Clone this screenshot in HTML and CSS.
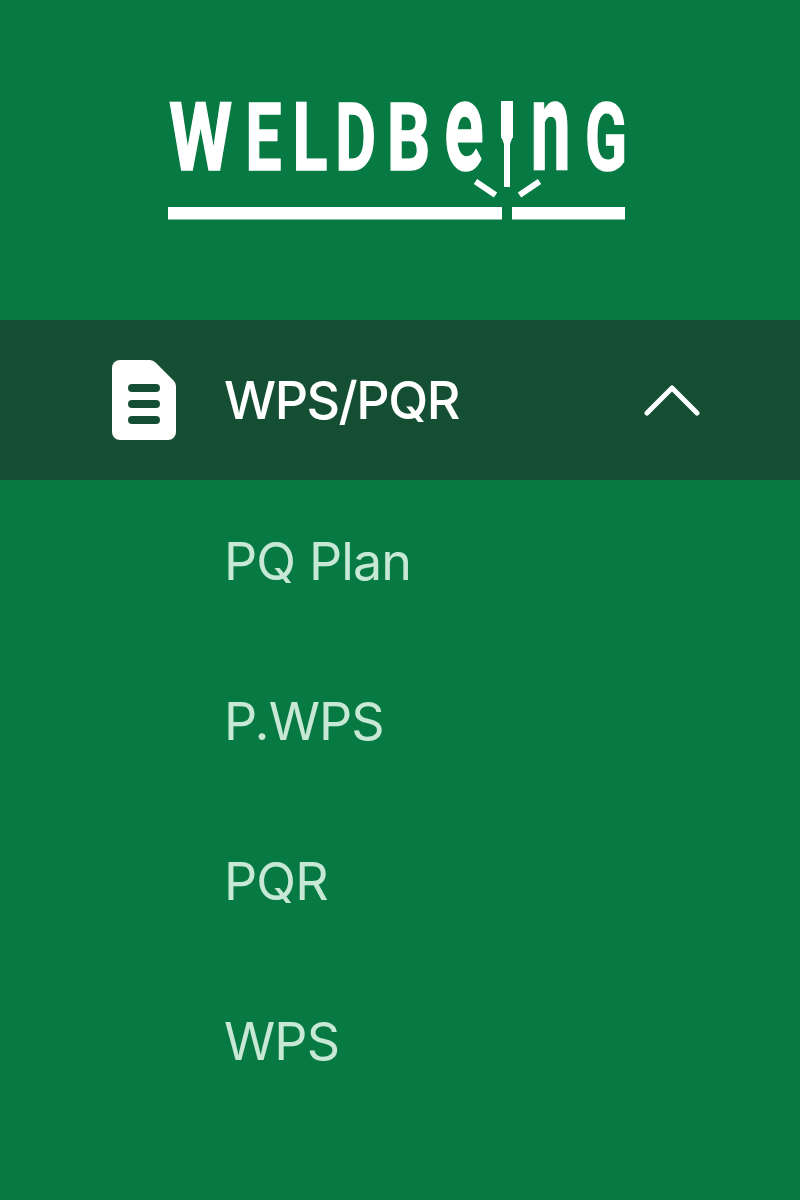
FILE: index.html
```html
<!DOCTYPE html>
<html lang="en">
<head>
<meta charset="utf-8">
<title>WELDBEING</title>
<link rel="stylesheet" href="styles.css">
</head>
<body>
<nav class="sidebar">
  <div class="logo">
    <svg class="logo-svg" width="458" height="120" viewBox="168 100 458 120" role="img" aria-label="WELDBEING">
      <text class="logo-text" transform="translate(200.500 170) scale(0.76 1)">W</text>
      <text class="logo-text" transform="translate(263.500 170) scale(0.68 1)">E</text>
      <text class="logo-text" transform="translate(310 170) scale(0.68 1)">L</text>
      <text class="logo-text" transform="translate(355.500 170) scale(0.66 1)">D</text>
      <text class="logo-text" transform="translate(408.500 170) scale(0.72 1)">B</text>
      <text class="logo-text logo-lower" transform="translate(464 170) scale(0.58 1)">e</text>
      <text class="logo-text logo-lower" transform="translate(550.500 170) scale(0.57 1)">n</text>
      <text class="logo-text" transform="translate(606 170) scale(0.65 1)">G</text>
      <rect class="logo-fill" x="501" y="101" width="12" height="37"/>
      <polygon class="logo-fill" points="501,136 513,136 510,144 510,187 504,187 504,144"/>
      <path class="logo-spark" d="M475.500 181.500 L495.500 195 M539.500 181.500 L519.500 195"/>
      <rect class="logo-fill" x="168" y="207" width="334" height="12.500"/>
      <rect class="logo-fill" x="512" y="207" width="113" height="12.500"/>
    </svg>
  </div>
  <div class="nav-head">
    <svg class="doc-icon" width="64" height="80" viewBox="0 0 64 80" aria-hidden="true">
      <path class="doc-body" d="M8 0 H38 Q41 0 43.500 2.500 L61.500 20.500 Q64 23 64 26 V72 A8 8 0 0 1 56 80 H8 A8 8 0 0 1 0 72 V8 A8 8 0 0 1 8 0 Z"/>
      <rect class="doc-line" x="16" y="24" width="32" height="8" rx="4"/>
      <rect class="doc-line" x="16" y="40" width="32" height="8" rx="4"/>
      <rect class="doc-line" x="16" y="56" width="32" height="8" rx="4"/>
    </svg>
    <span class="nav-title">WPS/PQR</span>
    <svg class="chevron" width="56" height="32" viewBox="0 0 56 32" aria-hidden="true">
      <path d="M3 28 L28 3 L53 28"/>
    </svg>
  </div>
  <ul class="sub-list">
    <li class="sub-item">PQ Plan</li>
    <li class="sub-item">P.WPS</li>
    <li class="sub-item">PQR</li>
    <li class="sub-item">WPS</li>
  </ul>
</nav>
</body>
</html>
```
FILE: styles.css
```css
* { box-sizing: border-box; }
html, body { margin: 0; padding: 0; }
body { background: #077a43; font-family: Inter, "Liberation Sans", sans-serif; }
.sidebar { width: 800px; height: 1200px; background: #077a43; }
.logo { height: 320px; padding: 100px 0 0 168px; }
.logo-svg { display: block; overflow: visible; }
.logo-text { font-family: Roboto, "Liberation Sans", sans-serif; font-weight: 700; font-size: 95px; fill: #fff; stroke: #fff; stroke-width: 1.500px; text-anchor: middle; }
.logo-lower { font-size: 126px; }
.logo-fill { fill: #fff; }
.logo-spark { fill: none; stroke: #fff; stroke-width: 6; }
.nav-head { height: 160px; background: #154f33; display: flex; align-items: center; padding-left: 112px; }
.doc-icon { flex: none; display: block; }
.doc-body { fill: #fff; }
.doc-line { fill: #154f33; }
.nav-title { margin: 2px 0 0 48px; font-size: 52px; font-weight: 450; color: #fff; letter-spacing: -1.500px; flex: 1; line-height: 1; }
.chevron { flex: none; margin: 2px 100px 0 0; display: block; }
.chevron path { fill: none; stroke: #fff; stroke-width: 5; stroke-linecap: round; stroke-linejoin: round; }
.sub-list { list-style: none; margin: 0; padding: 0; }
.sub-item { height: 160px; padding: 2px 0 0 224px; display: flex; align-items: center; font-size: 52px; color: #c8e8d6; letter-spacing: -0.900px; }
```
